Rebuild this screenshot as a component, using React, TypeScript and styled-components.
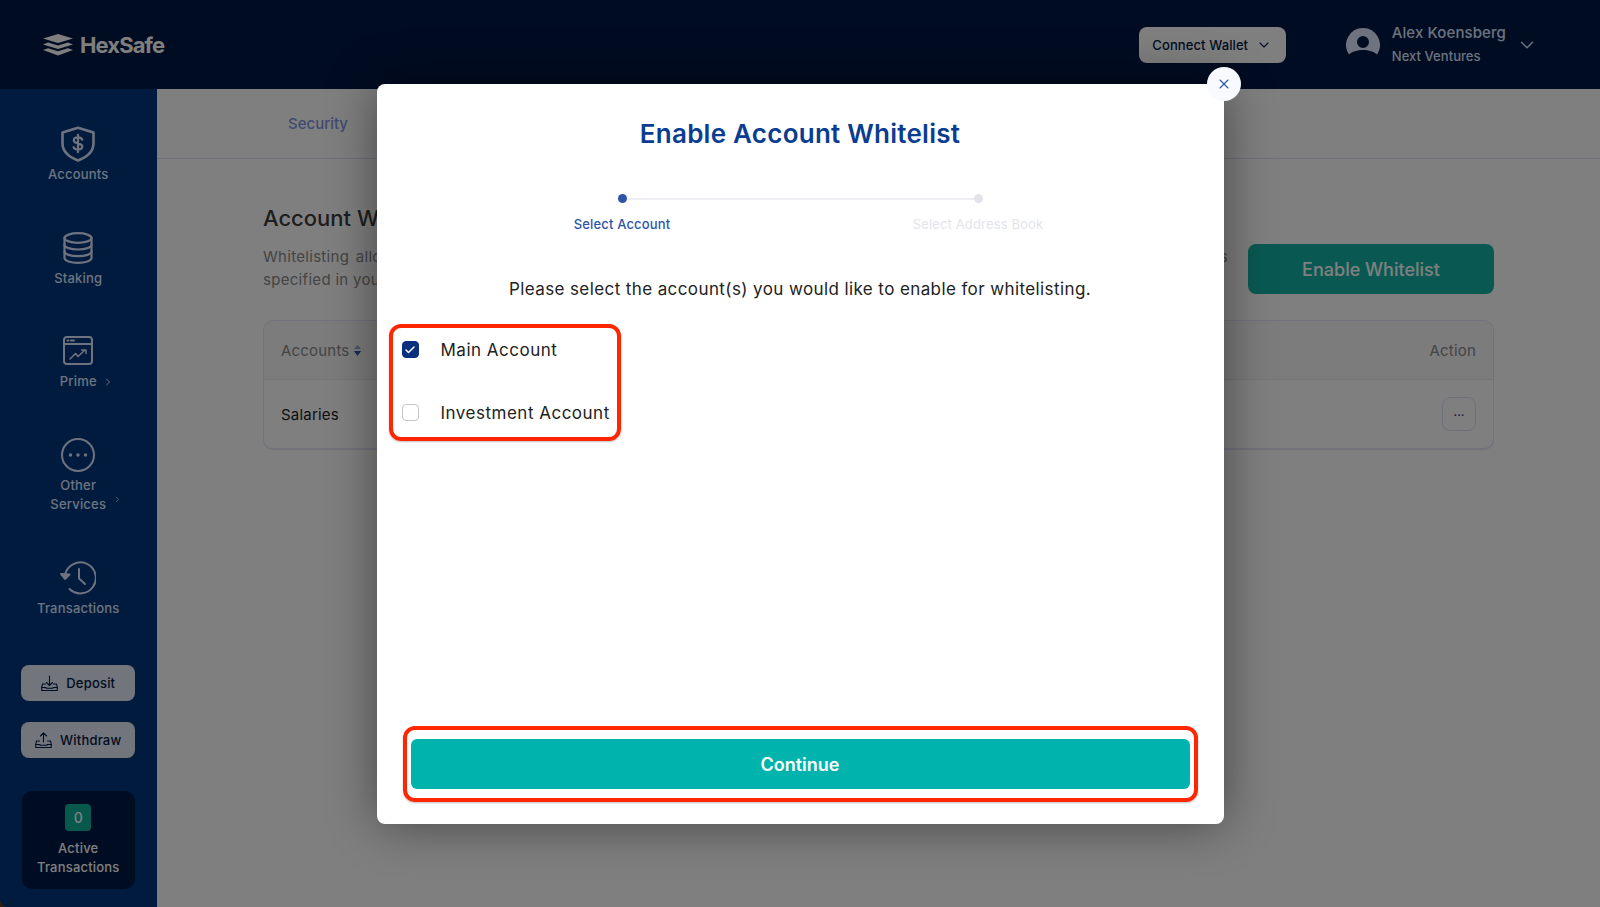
import React from "react";
import styled, { createGlobalStyle } from "styled-components";
import { ChevronDown, ChevronRight, X, Check } from "lucide-react";

const Global = createGlobalStyle`
  html, body { margin: 0; padding: 0; height: 100%; background: #6b3d14; }
  body { font-family: Inter, "Open Sans", "Liberation Sans", sans-serif; overflow: hidden; }
  #root { height: 100%; }
  * { box-sizing: border-box; }
`;

const Page = styled.div`
  position: relative;
  width: 1600px;
  height: 907px;
  display: grid;
  grid-template-columns: 156.500px 1fr;
  grid-template-rows: 89px 1fr;
  overflow: hidden;
`;

const Header = styled.header`
  grid-column: 1 / 3;
  background: #001844;
  display: flex;
  align-items: center;
  padding: 0 62px 0 42px;
`;

const Logo = styled.div`
  display: flex;
  align-items: center;
  gap: 6px;
  color: #fff;
  font-size: 22px;
  font-weight: 700;
  letter-spacing: -0.9px;
  margin-right: auto;
`;

const WalletButton = styled.button`
  width: 147px;
  height: 36px;
  border: 0;
  border-radius: 8px;
  background: #fff;
  color: #001844;
  font: 500 13px Inter, sans-serif;
  letter-spacing: 0.1px;
  display: flex;
  align-items: center;
  justify-content: center;
  gap: 8px;
  margin-right: 60px;
`;

const Avatar = styled.svg`
  width: 34px;
  height: 34px;
  margin-right: 12px;
`;

const UserBlock = styled.div`
  display: flex;
  flex-direction: column;
  gap: 5px;
  color: #dce6ff;
  margin-right: 10px;
`;

const UserName = styled.div`
  font-size: 15px;
  font-weight: 500;
  line-height: 18px;
  letter-spacing: 0.1px;
`;

const UserOrg = styled.div`
  font-size: 13px;
  font-weight: 500;
  line-height: 18px;
  letter-spacing: 0.05px;
`;

const UserChevron = styled(ChevronDown)`
  color: #dce6ff;
`;

const Sidebar = styled.aside`
  background: #00377c;
  border-bottom-left-radius: 8px;
  display: flex;
  flex-direction: column;
  align-items: center;
  padding: 37px 0 18px;
`;

const NavList = styled.nav`
  display: flex;
  flex-direction: column;
  gap: 45.700px;
  width: 100%;
`;

const NavItem = styled.div`
  display: flex;
  flex-direction: column;
  align-items: center;
  gap: 3px;
  color: #dce6ff;
`;

const NavIcon = styled.div`
  height: 36px;
  display: flex;
  align-items: center;
  justify-content: center;
`;

const NavLabel = styled.div`
  position: relative;
  font-size: 13px;
  font-weight: 500;
  line-height: 19px;
  letter-spacing: 0.2px;
  text-align: center;
`;

const SideChevron = styled(ChevronRight)<{ $left: number; $top: number }>`
  position: absolute;
  left: ${(p) => p.$left}px;
  top: ${(p) => p.$top}px;
`;

const SideActions = styled.div`
  margin-top: auto;
  display: flex;
  flex-direction: column;
  gap: 21px;
  width: 114px;
`;

const SideButton = styled.button`
  height: 36px;
  border: 0;
  border-radius: 8px;
  background: #e6ebf8;
  color: #001844;
  font: 500 13px Inter, sans-serif;
  letter-spacing: 0.2px;
  display: flex;
  align-items: center;
  justify-content: center;
  gap: 8px;
`;

const ActiveBox = styled.div`
  margin-top: 33px;
  width: 113px;
  height: 98px;
  border-radius: 10px;
  background: #001844;
  color: #fff;
  display: flex;
  flex-direction: column;
  align-items: center;
  padding-top: 13px;
  font-size: 13px;
  font-weight: 500;
  line-height: 19px;
  letter-spacing: 0.2px;
  text-align: center;
`;

const CountBadge = styled.div`
  width: 26px;
  height: 27px;
  border-radius: 4px;
  background: #0eb39a;
  color: #fff;
  font-size: 14px;
  display: flex;
  align-items: center;
  justify-content: center;
  margin-bottom: 8px;
`;

const Main = styled.main`
  background: #fff;
  display: flex;
  flex-direction: column;
`;

const TabBar = styled.div`
  height: 70px;
  border-bottom: 1px solid #dfe4fb;
  display: flex;
  align-items: center;
  padding-left: 131.500px;
  color: #7f96e0;
  font-size: 15px;
  font-weight: 500;
`;

const Content = styled.div`
  padding: 45px 106px 0 106.500px;
`;

const TopRow = styled.div`
  display: flex;
  justify-content: space-between;
  height: 116px;
`;

const Heading = styled.h2`
  margin: 0 0 14px;
  font-size: 22px;
  font-weight: 500;
  line-height: 28px;
  color: #3c3c3c;
`;

const Desc = styled.p`
  margin: 0;
  font-size: 15px;
  line-height: 22.500px;
  letter-spacing: 0.3px;
  color: #8a8a8a;
`;

const DescFirstLine = styled.span`
  display: block;
  width: 965px;
  text-align: justify;
  text-align-last: justify;
`;

const EnableButton = styled.button`
  width: 246px;
  height: 50px;
  margin-top: 40px;
  flex: none;
  border: 0;
  border-radius: 8px;
  background: #13b3a5;
  color: #fff;
  font: 500 18px Inter, sans-serif;
`;

const Table = styled.div`
  border: 1px solid #e2e5f6;
  border-bottom-width: 2px;
  border-radius: 10px;
  overflow: hidden;
`;

const TableHead = styled.div`
  height: 59px;
  background: #f8f8fa;
  border-bottom: 1px solid #e8e8ee;
  display: flex;
  align-items: center;
  justify-content: space-between;
  padding: 0 17px;
  font-size: 15px;
  letter-spacing: 0.2px;
  color: #8a8a8a;
`;

const HeadCell = styled.div`
  display: flex;
  align-items: center;
  gap: 4px;
`;

const TableRow = styled.div`
  height: 68px;
  display: flex;
  align-items: center;
  justify-content: space-between;
  padding: 0 17px;
  font-size: 15px;
  letter-spacing: 0.2px;
  color: #222;
`;

const DotsButton = styled.button`
  width: 34px;
  height: 34px;
  border: 1px solid #dfe3f5;
  border-radius: 8px;
  background: transparent;
  color: #30407a;
  font: 500 12px Inter, sans-serif;
  padding: 0 0 6px;
`;

const Overlay = styled.div`
  position: absolute;
  inset: 0;
  background: rgba(0, 0, 0, 0.5);
  display: flex;
  align-items: center;
  justify-content: center;
`;

const Modal = styled.section`
  position: relative;
  width: 847px;
  height: 740px;
  background: #fff;
  border-radius: 8px;
  box-shadow: 0 0 50px rgba(0, 0, 0, 0.45);
  display: flex;
  flex-direction: column;
  padding: 0 26px 22px;
`;

const CloseButton = styled.button`
  position: absolute;
  right: -17px;
  top: -17px;
  width: 34px;
  height: 34px;
  border: 0;
  border-radius: 50%;
  background: #f8faff;
  color: #2c55a8;
  display: flex;
  align-items: center;
  justify-content: center;
  padding: 0;
`;

const Title = styled.h1`
  margin: 32px 0 0;
  text-align: center;
  font-size: 26px;
  line-height: 36px;
  font-weight: 600;
  letter-spacing: 0.25px;
  color: #0a3d91;
`;

const Stepper = styled.div`
  position: relative;
  align-self: center;
  width: 712px;
  margin: 41px 0 0;
  display: grid;
  grid-template-columns: 1fr 1fr;
`;

const StepLine = styled.div`
  position: absolute;
  left: 178px;
  width: 356px;
  top: 5px;
  height: 2px;
  background: #eeeff3;
`;

const Step = styled.div`
  position: relative;
  display: flex;
  flex-direction: column;
  align-items: center;
  gap: 12px;
`;

const StepDot = styled.div<{ $active?: boolean }>`
  width: 9px;
  height: 9px;
  margin-top: 1px;
  border-radius: 50%;
  background: ${(p) => (p.$active ? "#2c55a8" : "#e3e4ea")};
`;

const StepLabel = styled.div<{ $active?: boolean }>`
  font-size: 13px;
  line-height: 18px;
  letter-spacing: 0.15px;
  font-weight: ${(p) => (p.$active ? 500 : 400)};
  color: ${(p) => (p.$active ? "#2c55a8" : "#e3e4ea")};
`;

const Prompt = styled.p`
  margin: 44px 0 0;
  text-align: center;
  font-size: 17px;
  line-height: 24px;
  letter-spacing: 0.4px;
  color: #222;
`;

const CheckFrame = styled.div`
  align-self: flex-start;
  width: 232px;
  height: 117px;
  margin: 23px 0 0 -14px;
  border: 4px solid #ff2600;
  border-radius: 12px;
  box-shadow: 0 1px 2px rgba(0, 0, 0, 0.25);
  padding: 10px 0 0 9px;
  display: flex;
  flex-direction: column;
  gap: 39px;
`;

const CheckRow = styled.label`
  display: flex;
  align-items: center;
  gap: 22px;
  height: 24px;
  font-size: 17px;
  letter-spacing: 0.5px;
  color: #222;
  white-space: nowrap;
`;

const CheckBox = styled.span<{ $checked?: boolean }>`
  width: 17px;
  height: 17px;
  border-radius: 4px;
  flex: none;
  display: flex;
  align-items: center;
  justify-content: center;
  color: #fff;
  border: 1px solid ${(p) => (p.$checked ? "#0a2f7c" : "#c4c4c4")};
  background: ${(p) => (p.$checked ? "#0a2f7c" : "#fff")};
`;

const ContinueFrame = styled.div`
  margin-top: auto;
  border: 4px solid #ff2600;
  border-radius: 12px;
  box-shadow: 0 1px 2px rgba(0, 0, 0, 0.25);
  padding: 9.500px 4px 8.500px;
`;

const ContinueButton = styled.button`
  display: block;
  width: 100%;
  height: 50px;
  border: 0;
  border-radius: 6px;
  background: #00b3ac;
  color: #fff;
  font: 600 18px Inter, sans-serif;
`;

const ShieldIcon = () => (
  <svg width="36" height="36" viewBox="0 0 36 36" fill="none" stroke="currentColor" strokeWidth="2.600" strokeLinejoin="round" strokeLinecap="round">
    <path d="M18 1.800 33.500 6.500v11c0 8-6.500 13.500-15.500 17C9 31 2.500 25.500 2.500 17.500v-11Z" />
    <path d="M22.300 13.800c-.5-1.500-2.200-2.400-4.300-2.400-2.500 0-4.200 1.200-4.200 3 0 4 8.500 2 8.500 6.200 0 1.800-1.800 3-4.300 3-2.200 0-3.900-.9-4.400-2.400M18 8.800v17.400" strokeWidth="2.200" />
  </svg>
);

const StakingIcon = () => (
  <svg width="30" height="32" viewBox="0 0 30 32" fill="none" stroke="currentColor" strokeWidth="2.200" strokeLinecap="round" strokeLinejoin="round">
    <ellipse cx="15" cy="6" rx="13.500" ry="4.800" />
    <path d="M1.500 6v20c0 2.800 6 4.800 13.500 4.800S28.500 28.800 28.500 26V6" />
    <path d="M1.500 12.700c0 2.800 6 4.800 13.500 4.800s13.500-2 13.500-4.800" />
    <path d="M1.500 19.400c0 2.800 6 4.800 13.500 4.800s13.500-2 13.500-4.800" />
  </svg>
);

const PrimeIcon = () => (
  <svg width="30" height="30" viewBox="0 0 30 30" fill="none" stroke="currentColor" strokeWidth="2" strokeLinejoin="round" strokeLinecap="round">
    <rect x="1" y="1" width="28" height="27" rx="3" />
    <path d="M1 8h28" />
    <path d="M4.500 4.500h1M8 4.500h3" />
    <path d="M7 23l5.500-5.500 2.500 3L22 14M18.500 14H23v3.500" strokeWidth="1.500" />
  </svg>
);

const DotsCircleIcon = () => (
  <svg width="34" height="34" viewBox="0 0 34 34" fill="none" stroke="currentColor" strokeWidth="2">
    <circle cx="17" cy="17" r="16" />
    <circle cx="9.500" cy="17" r="1.700" fill="currentColor" stroke="none" />
    <circle cx="17" cy="17" r="1.700" fill="currentColor" stroke="none" />
    <circle cx="24.500" cy="17" r="1.700" fill="currentColor" stroke="none" />
  </svg>
);

const HistoryIcon = () => (
  <svg width="36" height="34" viewBox="0 0 36 34" fill="none" stroke="currentColor" strokeWidth="2" strokeLinecap="round" strokeLinejoin="round">
    <path d="M5.200 13.500A15.500 15.500 0 1 1 9.500 28" />
    <path d="M1 13 5 18 9.500 13.500Z" fill="currentColor" />
    <path d="M19 8v9.500l6 5.500" />
  </svg>
);

const TrayIcon = ({ up }: { up?: boolean }) => (
  <svg width="17" height="17" viewBox="0 0 17 17" fill="none" stroke="#001844" strokeWidth="1.100" strokeLinejoin="round" strokeLinecap="round">
    <path d="M4.500 9H1.500L.8 12v3.500h15.400V12l-.7-3h-3" />
    <path d="M.8 12.500H5v.8h7v-.8h4.200" />
    {up ? <path d="M8.500 10V1M5.500 4l3-3 3 3" /> : <path d="M8.500 1v9.500M5.500 7.500l3 3 3-3" />}
  </svg>
);

const SortIcon = () => (
  <svg width="7" height="11" viewBox="0 0 7 11">
    <path d="M3.500 0 7 4H0Z" fill="#9aa6c8" />
    <path d="M3.500 11 0 6h7Z" fill="#2c55a8" />
  </svg>
);

const LogoMark = () => (
  <svg width="32" height="22" viewBox="0 0 32 22" fill="#fff">
    <path d="M16 0 31 4.500 16 9 1 4.500Z" />
    <path d="M1 10.500 6 8.500 16 11.500 26 8.500 31 10.500 16 15Z" />
    <path d="M1 16 6 14.300 16 17.200 26 14.300 31 16 16 21.500Z" />
  </svg>
);

export default function App() {
  return (
    <Page>
      <Global />
      <Header>
        <Logo>
          <LogoMark />
          <span>HexSafe</span>
        </Logo>
        <WalletButton>
          Connect Wallet
          <ChevronDown size={16} strokeWidth={1.6} />
        </WalletButton>
        <Avatar viewBox="0 0 34 34">
          <path d="M17 0a17 17 0 0 1 14 26.500C28 23.500 22.500 22 17 22S6 23.500 3 26.500A17 17 0 0 1 17 0Zm0 8a6 6 0 1 0 0 12 6 6 0 0 0 0-12Z" fill="#dce6ff" />
        </Avatar>
        <UserBlock>
          <UserName>Alex Koensberg</UserName>
          <UserOrg>Next Ventures</UserOrg>
        </UserBlock>
        <UserChevron size={22} strokeWidth={1.6} />
      </Header>

      <Sidebar>
        <NavList>
          <NavItem>
            <NavIcon><ShieldIcon /></NavIcon>
            <NavLabel>Accounts</NavLabel>
          </NavItem>
          <NavItem>
            <NavIcon><StakingIcon /></NavIcon>
            <NavLabel>Staking</NavLabel>
          </NavItem>
          <NavItem>
            <NavIcon><PrimeIcon /></NavIcon>
            <NavLabel>
              Prime
              <SideChevron size={12} $left={42} $top={4} />
            </NavLabel>
          </NavItem>
          <NavItem>
            <NavIcon><DotsCircleIcon /></NavIcon>
            <NavLabel>
              Other<br />Services
              <SideChevron size={9} $left={63} $top={19} />
            </NavLabel>
          </NavItem>
          <NavItem>
            <NavIcon><HistoryIcon /></NavIcon>
            <NavLabel>Transactions</NavLabel>
          </NavItem>
        </NavList>
        <SideActions>
          <SideButton><TrayIcon />Deposit</SideButton>
          <SideButton><TrayIcon up />Withdraw</SideButton>
        </SideActions>
        <ActiveBox>
          <CountBadge>0</CountBadge>
          Active<br />Transactions
        </ActiveBox>
      </Sidebar>

      <Main>
        <TabBar>Security</TabBar>
        <Content>
          <TopRow>
            <div>
              <Heading>Account Whitelist</Heading>
              <Desc>
                <DescFirstLine>
                  Whitelisting allows you to restrict withdrawals from your accounts so that funds can only be sent to the destination addresses
                </DescFirstLine>
                specified in your address book.
              </Desc>
            </div>
            <EnableButton>Enable Whitelist</EnableButton>
          </TopRow>
          <Table>
            <TableHead>
              <HeadCell>Accounts <SortIcon /></HeadCell>
              <HeadCell>Action</HeadCell>
            </TableHead>
            <TableRow>
              <span>Salaries</span>
              <DotsButton>...</DotsButton>
            </TableRow>
          </Table>
        </Content>
      </Main>

      <Overlay>
        <Modal>
          <CloseButton aria-label="Close"><X size={16} strokeWidth={1.6} /></CloseButton>
          <Title>Enable Account Whitelist</Title>
          <Stepper>
            <StepLine />
            <Step>
              <StepDot $active />
              <StepLabel $active>Select Account</StepLabel>
            </Step>
            <Step>
              <StepDot />
              <StepLabel>Select Address Book</StepLabel>
            </Step>
          </Stepper>
          <Prompt>Please select the account(s) you would like to enable for whitelisting.</Prompt>
          <CheckFrame>
            <CheckRow>
              <CheckBox $checked><Check size={12} strokeWidth={3} /></CheckBox>
              Main Account
            </CheckRow>
            <CheckRow>
              <CheckBox />
              Investment Account
            </CheckRow>
          </CheckFrame>
          <ContinueFrame>
            <ContinueButton>Continue</ContinueButton>
          </ContinueFrame>
        </Modal>
      </Overlay>
    </Page>
  );
}
